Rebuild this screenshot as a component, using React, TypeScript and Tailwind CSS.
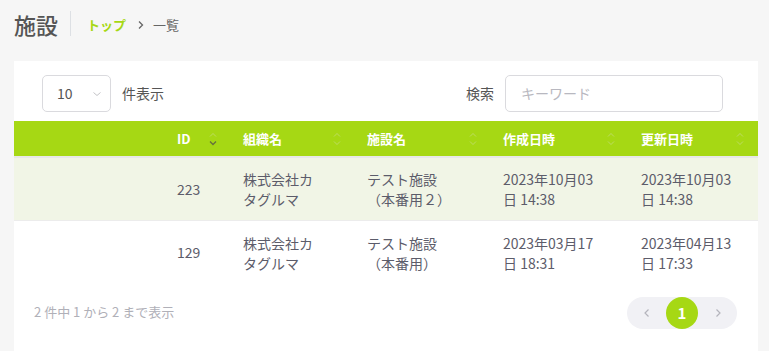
import React from "react";

const font = { fontFamily: '"Noto Sans CJK JP", "Noto Sans", sans-serif' };

type Row = {
  id: number;
  org: string[];
  facility: string[];
  created: string[];
  updated: string[];
};

const rows: Row[] = [
  {
    id: 223,
    org: ["株式会社カ", "タグルマ"],
    facility: ["テスト施設", "（本番用２）"],
    created: ["2023年10月03", "日 14:38"],
    updated: ["2023年10月03", "日 14:38"],
  },
  {
    id: 129,
    org: ["株式会社カ", "タグルマ"],
    facility: ["テスト施設", "（本番用）"],
    created: ["2023年03月17", "日 18:31"],
    updated: ["2023年04月13", "日 17:33"],
  },
];

function SortIcon({ active }: { active?: boolean }) {
  return (
    <svg width="10" height="18" viewBox="0 0 10 18" className="shrink-0">
      <path d="M2 6.5 L5 3.5 L8 6.5" fill="none" stroke="rgba(215,225,190,0.45)" strokeWidth="1" />
      <path
        d="M2 11.5 L5 14.5 L8 11.5"
        fill="none"
        stroke={active ? "#66703f" : "rgba(215,225,190,0.45)"}
        strokeWidth={active ? 1.3 : 1}
      />
    </svg>
  );
}

function HeadCell({ label, width, active }: { label: string; width: string; active?: boolean }) {
  return (
    <div className={`flex items-center justify-between pl-3 pr-[13px] ${width}`}>
      <span className="text-[13px] font-bold text-white">{label}</span>
      <SortIcon active={active} />
    </div>
  );
}

function Lines({ lines }: { lines: string[] }) {
  return (
    <div className="leading-[20px]">
      {lines.map((l) => (
        <div key={l}>{l}</div>
      ))}
    </div>
  );
}

export default function App() {
  return (
    <div className="h-[351px] w-[769px] overflow-hidden bg-[#f6f6f6]" style={font}>
      <div className="flex h-[61px] items-start px-[14px] pt-[10px]">
        <h1 className="text-[22px] font-medium leading-[28px] text-[#555]">施設</h1>
        <div className="ml-[12px] mt-[1px] h-[25px] w-px bg-[#dde0e4]" />
        <nav className="ml-[16px] mt-[5px] flex items-center text-[13px]">
          <span className="font-bold text-[#a6d814]">トップ</span>
          <svg width="8" height="10" viewBox="0 0 8 10" className="ml-[11px] mr-[8px]">
            <path d="M2 1.5 L5.5 5 L2 8.5" fill="none" stroke="#666" strokeWidth="1.3" />
          </svg>
          <span className="text-[#666]">一覧</span>
        </nav>
      </div>

      <div className="ml-[14px] w-[744px] bg-white pb-8">
        <div className="flex items-center justify-between pl-[28px] pr-[35px] pt-[14px]">
          <div className="flex items-center">
            <div className="flex h-[37px] w-[69px] items-center justify-between rounded-[5px] border border-[#dadade] pl-[14px] pr-[8px] text-[14px] text-[#555]">
              <span>10</span>
              <svg width="10" height="8" viewBox="0 0 10 8">
                <path d="M1.5 2.5 L5 5.5 L8.5 2.5" fill="none" stroke="#c4c4c8" strokeWidth="1" />
              </svg>
            </div>
            <span className="ml-[11px] text-[14px] text-[#555]">件表示</span>
          </div>
          <div className="flex items-center">
            <span className="mr-[11px] text-[14px] text-[#555]">検索</span>
            <div className="flex h-[37px] w-[218px] items-center rounded-[5px] border border-[#dadade] px-[15px] text-[14px] text-[#b8b8c0]">
              キーワード
            </div>
          </div>
        </div>

        <div className="mt-[9px]">
          <div className="flex h-[37px] border-b-2 border-[#e8e8e8] bg-[#a6d814]">
            <div className="w-[151px]" />
            <HeadCell label="ID" width="w-[66px]" active />
            <HeadCell label="組織名" width="w-[124px]" />
            <HeadCell label="施設名" width="w-[136px]" />
            <HeadCell label="作成日時" width="w-[138px]" />
            <HeadCell label="更新日時" width="w-[129px]" />
          </div>
          {rows.map((r, i) => (
            <div
              key={r.id}
              className={`flex h-[63px] items-center text-[14px] text-[#5c5c6a] ${
                i === 0 ? "border-b border-[#ececec] bg-[#f1f5e6]" : "bg-white"
              }`}
            >
              <div className="w-[151px]" />
              <div className="w-[66px] pl-3">{r.id}</div>
              <div className="w-[124px] pl-3">
                <Lines lines={r.org} />
              </div>
              <div className="w-[136px] pl-3">
                <Lines lines={r.facility} />
              </div>
              <div className="w-[138px] pl-3">
                <Lines lines={r.created} />
              </div>
              <div className="w-[129px] pl-3">
                <Lines lines={r.updated} />
              </div>
            </div>
          ))}
        </div>

        <div className="flex items-center justify-between pl-[20px] pr-[21px] pt-[13px]">
          <span className="-mt-[3px] text-[13px] text-[#b0b0b8]">2 件中 1 から 2 まで表示</span>
          <div className="flex h-[32px] w-[110px] items-center justify-between rounded-full bg-[#f1f1f5]">
            <span className="flex w-[39px] justify-center">
              <svg width="8" height="10" viewBox="0 0 8 10">
                <path d="M5.5 1.5 L2 5 L5.5 8.5" fill="none" stroke="#b4b4bc" strokeWidth="1.2" />
              </svg>
            </span>
            <span className="flex h-[32px] w-[32px] items-center justify-center rounded-full bg-[#a6d814] text-[15px] font-bold text-white">
              1
            </span>
            <span className="flex w-[39px] justify-center">
              <svg width="8" height="10" viewBox="0 0 8 10">
                <path d="M2.5 1.5 L6 5 L2.5 8.5" fill="none" stroke="#b4b4bc" strokeWidth="1.2" />
              </svg>
            </span>
          </div>
        </div>
      </div>
    </div>
  );
}
